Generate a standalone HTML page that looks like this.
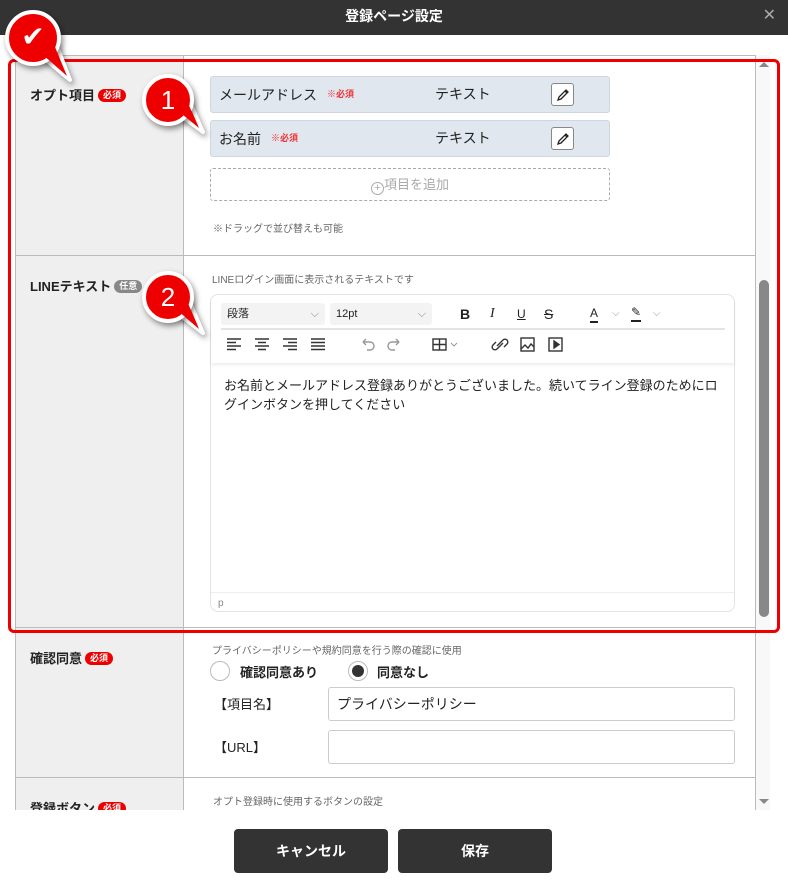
<!DOCTYPE html>
<html><head><meta charset="utf-8"><style>
*{box-sizing:border-box;margin:0;padding:0}
body{width:788px;height:889px;position:relative;background:#fff;font-family:"Liberation Sans","Noto Sans CJK JP",sans-serif;color:#222;overflow:hidden}
.abs{position:absolute}
.hdr{left:0;top:0;width:788px;height:35px;background:#333;color:#fff;font-size:14px;font-weight:bold;text-align:center;line-height:32px}
.clip{left:0;top:35px;width:788px;height:775px;overflow:hidden}
.lbl{background:#efefef;border-left:1px solid #bbb;border-right:1px solid #bbb;left:15px;width:169px}
.hl{height:1px;background:#bbb;left:15px;width:741px}
.t{font-size:13px;font-weight:bold}
.badge{display:inline-block;background:#e00;color:#fff;font-size:9px;border-radius:8px;padding:0 5px;line-height:13px;vertical-align:2px;margin-left:3px}
.badge.g{background:#888}
.field{left:210px;width:400px;height:37px;background:#e1e7ef;border:1px solid #cfd6df;border-radius:3px;font-size:14px;line-height:35px;padding-left:8px}
.req{color:#e33;font-size:9px;font-weight:bold;margin-left:10px;vertical-align:3px}
.edit{position:absolute;left:340px;top:6px;width:23px;height:23px;border:1px solid #888;border-radius:3px;background:#fff}
.small{font-size:10px;color:#666}
.btn{top:829px;height:44px;background:#333;color:#fff;font-size:14px;font-weight:bold;text-align:center;line-height:44px;border-radius:4px}
.inp{left:328px;width:407px;height:34px;border:1px solid #ccc;border-radius:3px;background:#fff;font-size:14px;line-height:32px;padding-left:8px}
.bub{border-radius:50%;background:#e00;border:4px solid #fff;box-shadow:2px 3px 6px rgba(0,0,0,.45);color:#fff;text-align:center;font-size:26px}
</style></head><body>
<div class="abs hdr">登録ページ設定<span style="position:absolute;right:12px;top:0;color:#aaa;font-weight:normal;font-size:16px">✕</span></div>

<div class="abs clip">
 <div class="abs lbl" style="top:20px;height:760px"></div>
 <div class="abs" style="left:755px;top:20px;width:1px;height:760px;background:#bbb"></div>
 <div class="abs hl" style="top:20px"></div>
 <div class="abs hl" style="top:220px"></div>
 <div class="abs hl" style="top:592px"></div>
 <div class="abs hl" style="top:742px"></div>
 <div class="abs" style="left:756px;top:20px;width:14px;height:760px;background:#f8f8f8"></div>
 <div class="abs" style="left:759px;top:245px;width:10px;height:337px;background:#888;border-radius:5px"></div>
 <div class="abs" style="left:759px;top:27px;width:0;height:0;border:5px solid transparent;border-bottom-color:#888;border-top:0"></div>
 <div class="abs" style="left:759px;top:764px;width:0;height:0;border:5px solid transparent;border-top-color:#888;border-bottom:0"></div>

 <div class="abs t" style="left:30px;top:50px">オプト項目<span class="badge">必須</span></div>
 <div class="abs field" style="top:41px">メールアドレス<span class="req">※必須</span><span style="position:absolute;left:224px">テキスト</span><div class="edit"><svg width="21" height="21" viewBox="0 0 21 21"><path d="M6 15l1-3 7-7 2 2-7 7z M13 6l2 2" fill="none" stroke="#222" stroke-width="1.3"/></svg></div></div>
 <div class="abs field" style="top:85px">お名前<span class="req">※必須</span><span style="position:absolute;left:224px">テキスト</span><div class="edit"><svg width="21" height="21" viewBox="0 0 21 21"><path d="M6 15l1-3 7-7 2 2-7 7z M13 6l2 2" fill="none" stroke="#222" stroke-width="1.3"/></svg></div></div>
 <div class="abs" style="left:210px;top:133px;width:400px;height:33px;border:1px dashed #aaa;border-radius:3px;text-align:center;line-height:31px;color:#aaa;font-size:13px"><span style="display:inline-block;width:13px;height:13px;border:1px solid #aaa;border-radius:50%;font-size:11px;line-height:11px;vertical-align:-2px">+</span>項目を追加</div>
 <div class="abs small" style="left:213px;top:185px">※ドラッグで並び替えも可能</div>

 <div class="abs t" style="left:30px;top:241px">LINEテキスト<span class="badge g">任意</span></div>
 <div class="abs small" style="left:212px;top:236px">LINEログイン画面に表示されるテキストです</div>
 <div class="abs" style="left:210px;top:259px;width:525px;height:318px;border:1px solid #e3e3e3;border-radius:8px;background:#fff"></div>
 <div class="abs" style="left:211px;top:260px;width:523px;height:68px;box-shadow:0 2px 3px rgba(0,0,0,.08);border-radius:8px 8px 0 0"></div>
 <div class="abs" style="left:221px;top:268px;width:104px;height:22px;background:#f3f3f3;border-radius:3px;font-size:11px;line-height:22px;padding-left:6px">段落<span style="position:absolute;right:6px;color:#888">⌵</span></div>
 <div class="abs" style="left:330px;top:268px;width:102px;height:22px;background:#f3f3f3;border-radius:3px;font-size:11px;line-height:22px;padding-left:6px">12pt<span style="position:absolute;right:6px;color:#888">⌵</span></div>
 <div class="abs" style="left:460px;top:268px;font-size:14px;line-height:22px;color:#222;width:220px">
  <b style="position:absolute;left:0">B</b><i style="position:absolute;left:30px;font-family:'Liberation Serif'">I</i><u style="position:absolute;left:57px;font-size:12px">U</u><s style="position:absolute;left:84px">S</s>
  <span style="position:absolute;left:130px;font-size:12px;border-bottom:2px solid #222;line-height:16px;top:2px">A</span><span style="position:absolute;left:152px;color:#999;font-size:10px">⌵</span>
  <span style="position:absolute;left:171px;top:1px;font-size:12px;border-bottom:2px solid #222;line-height:16px">✎</span><span style="position:absolute;left:193px;color:#999;font-size:10px">⌵</span>
 </div>
 <div class="abs" style="left:221px;top:293px;width:504px;height:2px;background:#e3e3e3"></div>
 <svg class="abs" style="left:221px;top:298px" width="380" height="22" viewBox="0 0 380 22" fill="none" stroke="#333" stroke-width="1.4">
  <path d="M6 6h14M6 9.5h9M6 13h14M6 16.5h9"/><path d="M34 6h14M37 9.5h8M34 13h14M37 16.5h8"/><path d="M62 6h14M67 9.5h9M62 13h14M67 16.5h9"/><path d="M90 6h14M90 9.5h14M90 13h14M90 16.5h14"/>
  <path d="M142 9h7a4 4 0 010 8h-3M142 9l3-3M142 9l3 3" stroke="#999"/><path d="M178 9h-7a4 4 0 000 8h3M178 9l-3-3M178 9l-3 3" stroke="#999"/>
  <rect x="212" y="6" width="13" height="11"/><path d="M212 11.5h13M218.5 6v11"/><path d="M230 10l3 3 3-3" stroke="#999" stroke-width="1"/>
  <path d="M276 13l6-6a2.5 2.5 0 014 4l-3 3M282 10l-6 6a2.5 2.5 0 01-4-4l3-3"/>
  <rect x="300" y="5" width="13" height="13"/><path d="M300 16l4-4 3 3 3-4 3 3"/><rect x="328" y="5" width="13" height="13"/><path d="M333 8v7l5-3.5z" fill="#333"/>
 </svg>
 <div class="abs" style="left:224px;top:341px;width:500px;font-size:13px;line-height:19px;color:#222">お名前とメールアドレス登録ありがとうございました。続いてライン登録のためにログインボタンを押してください</div>
 <div class="abs" style="left:211px;top:557px;width:523px;height:1px;background:#eee"></div>
 <div class="abs small" style="left:218px;top:563px;color:#888">p</div>

 <div class="abs t" style="left:30px;top:613px">確認同意<span class="badge">必須</span></div>
 <div class="abs small" style="left:212px;top:607px">プライバシーポリシーや規約同意を行う際の確認に使用</div>
 <div class="abs" style="left:210px;top:626px;width:20px;height:20px;border:1px solid #bbb;border-radius:50%"></div>
 <div class="abs t" style="left:240px;top:627px">確認同意あり</div>
 <div class="abs" style="left:348px;top:626px;width:20px;height:20px;border:1px solid #bbb;border-radius:50%"><div style="margin:3px;width:12px;height:12px;border-radius:50%;background:#333"></div></div>
 <div class="abs t" style="left:377px;top:627px">同意なし</div>
 <div class="abs" style="left:214px;top:659px;font-size:13px">【項目名】</div>
 <div class="abs inp" style="top:652px">プライバシーポリシー</div>
 <div class="abs" style="left:214px;top:702px;font-size:13px">【URL】</div>
 <div class="abs inp" style="top:695px"></div>

 <div class="abs t" style="left:30px;top:763px">登録ボタン<span class="badge">必須</span></div>
 <div class="abs small" style="left:213px;top:758px">オプト登録時に使用するボタンの設定</div>
</div>

<div class="abs" style="left:8px;top:59px;width:772px;height:574px;border:3px solid #e00;border-radius:6px"></div>

<svg class="abs" style="left:0;top:0;filter:drop-shadow(2px 3px 3px rgba(0,0,0,.4))" width="220" height="350" viewBox="0 0 220 350">
 <path d="M40 55L70 80L56 44z" fill="#e00" stroke="#fff" stroke-width="4" stroke-linejoin="round"/>
 <path d="M176 112L203 132L188 98z" fill="#e00" stroke="#fff" stroke-width="4" stroke-linejoin="round"/>
 <path d="M176 312L203 333L188 298z" fill="#e00" stroke="#fff" stroke-width="4" stroke-linejoin="round"/>
</svg>
<div class="abs bub" style="left:5px;top:10px;width:56px;height:56px;line-height:46px;font-size:28px">✔</div>
<div class="abs bub" style="left:142px;top:74px;width:52px;height:52px;line-height:44px">1</div>
<div class="abs bub" style="left:142px;top:271px;width:52px;height:52px;line-height:44px">2</div>
<svg class="abs" style="left:0;top:0" width="220" height="350" viewBox="0 0 220 350">
 <path d="M42 54L67 76L55 47z" fill="#e00"/>
 <path d="M177 110L199 128L187 101z" fill="#e00"/>
 <path d="M177 310L199 329L187 301z" fill="#e00"/>
</svg>

<div class="abs btn" style="left:234px;width:154px">キャンセル</div>
<div class="abs btn" style="left:398px;width:154px">保存</div>
</body></html>
